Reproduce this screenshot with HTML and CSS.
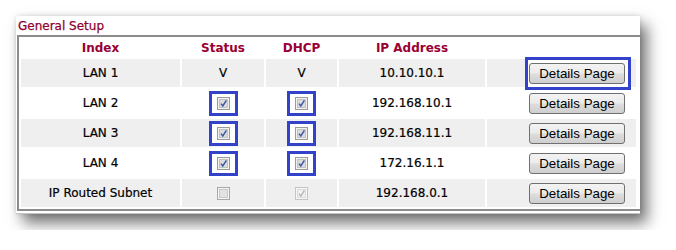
FILE: index.html
```html
<!DOCTYPE html>
<html lang="en">
<head>
  <meta charset="UTF-8">
  <title>General Setup</title>
  <link rel="stylesheet" href="styles.css">
</head>
<body>

  <div class="panel">
    <div class="panel-title">General Setup</div>
    <div class="frame">
      <table class="lan-table">
        <thead>
          <tr>
            <th class="c-index">Index</th>
            <th class="c-status">Status</th>
            <th class="c-dhcp">DHCP</th>
            <th class="c-ip">IP Address</th>
            <th class="c-btn"></th>
          </tr>
        </thead>
        <tbody>
          <tr class="odd">
            <td>LAN 1</td>
            <td>V</td>
            <td>V</td>
            <td>10.10.10.1</td>
            <td class="btn-cell"><span class="hl hl-btn"><button class="details">Details Page</button></span></td>
          </tr>
          <tr>
            <td>LAN 2</td>
            <td><span class="hl hl-cb"><svg class="cb" viewBox="0 0 13 13"><rect x=".5" y=".5" width="12" height="12" fill="#f2f2f2" stroke="#9a9a9a"/><rect x="2.5" y="2.5" width="8" height="8" fill="#dcdcdc" stroke="#c2c2c2"/><path d="M4 6.6l1.8 2.4 3.6-5.6" fill="none" stroke="#3d58a8" stroke-width="1.5"/></svg></span></td>
            <td><span class="hl hl-cb"><svg class="cb" viewBox="0 0 13 13"><rect x=".5" y=".5" width="12" height="12" fill="#f2f2f2" stroke="#9a9a9a"/><rect x="2.5" y="2.5" width="8" height="8" fill="#dcdcdc" stroke="#c2c2c2"/><path d="M4 6.6l1.8 2.4 3.6-5.6" fill="none" stroke="#3d58a8" stroke-width="1.5"/></svg></span></td>
            <td>192.168.10.1</td>
            <td class="btn-cell"><button class="details">Details Page</button></td>
          </tr>
          <tr class="odd">
            <td>LAN 3</td>
            <td><span class="hl hl-cb"><svg class="cb" viewBox="0 0 13 13"><rect x=".5" y=".5" width="12" height="12" fill="#f2f2f2" stroke="#9a9a9a"/><rect x="2.5" y="2.5" width="8" height="8" fill="#dcdcdc" stroke="#c2c2c2"/><path d="M4 6.6l1.8 2.4 3.6-5.6" fill="none" stroke="#3d58a8" stroke-width="1.5"/></svg></span></td>
            <td><span class="hl hl-cb"><svg class="cb" viewBox="0 0 13 13"><rect x=".5" y=".5" width="12" height="12" fill="#f2f2f2" stroke="#9a9a9a"/><rect x="2.5" y="2.5" width="8" height="8" fill="#dcdcdc" stroke="#c2c2c2"/><path d="M4 6.6l1.8 2.4 3.6-5.6" fill="none" stroke="#3d58a8" stroke-width="1.5"/></svg></span></td>
            <td>192.168.11.1</td>
            <td class="btn-cell"><button class="details">Details Page</button></td>
          </tr>
          <tr>
            <td>LAN 4</td>
            <td><span class="hl hl-cb"><svg class="cb" viewBox="0 0 13 13"><rect x=".5" y=".5" width="12" height="12" fill="#f2f2f2" stroke="#9a9a9a"/><rect x="2.5" y="2.5" width="8" height="8" fill="#dcdcdc" stroke="#c2c2c2"/><path d="M4 6.6l1.8 2.4 3.6-5.6" fill="none" stroke="#3d58a8" stroke-width="1.5"/></svg></span></td>
            <td><span class="hl hl-cb"><svg class="cb" viewBox="0 0 13 13"><rect x=".5" y=".5" width="12" height="12" fill="#f2f2f2" stroke="#9a9a9a"/><rect x="2.5" y="2.5" width="8" height="8" fill="#dcdcdc" stroke="#c2c2c2"/><path d="M4 6.6l1.8 2.4 3.6-5.6" fill="none" stroke="#3d58a8" stroke-width="1.5"/></svg></span></td>
            <td>172.16.1.1</td>
            <td class="btn-cell"><button class="details">Details Page</button></td>
          </tr>
          <tr class="odd">
            <td>IP Routed Subnet</td>
            <td><svg class="cb" viewBox="0 0 13 13"><rect x=".5" y=".5" width="12" height="12" fill="#f4f4f4" stroke="#a8a8a8"/><rect x="2.5" y="2.5" width="8" height="8" fill="#e2e2e2" stroke="#c8c8c8"/></svg></td>
            <td><svg class="cb" viewBox="0 0 13 13"><rect x=".5" y=".5" width="12" height="12" fill="#f7f7f7" stroke="#c4c4c4"/><rect x="2.5" y="2.5" width="8" height="8" fill="#f0f0f0" stroke="#dcdcdc"/><path d="M4 6.6l1.8 2.4 3.6-5.6" fill="none" stroke="#b4b4b4" stroke-width="1.3"/></svg></td>
            <td>192.168.0.1</td>
            <td class="btn-cell"><button class="details">Details Page</button></td>
          </tr>
        </tbody>
      </table>
    </div>
  </div>

</body>
</html>
```

FILE: styles.css
```css
* {
  box-sizing: border-box;
}

body {
  margin: 0;
  padding: 16px;
  background-color: #ffffff;
  font-family: "DejaVu Sans", Verdana, sans-serif;
  font-size: 12px;
  color: #000000;
}

.panel {
  width: 624px;
  padding: 3px 0 2px 1px;
  background-color: #ffffff;
  border-bottom: 1px solid #c4c4c4;
  box-shadow: 7px 9px 14px rgba(0, 0, 0, 0.55), 0 0 5px rgba(0, 0, 0, 0.15);
}

.panel-title {
  height: 14px;
  line-height: 14px;
  margin-bottom: 2px;
  padding-left: 1px;
  color: #8f0030;
  -webkit-text-stroke: 0.25px #8f0030;
}

.frame {
  border-top: 2px solid #8c8c8c;
  border-left: 2px solid #8c8c8c;
  border-bottom: 2px solid #8c8c8c;
}

.lan-table {
  width: 619px;
  table-layout: fixed;
  border-collapse: separate;
  border-spacing: 2px;
}

.lan-table th,
.lan-table td {
  padding: 0;
  text-align: center;
  vertical-align: middle;
}

.lan-table th {
  height: 18px;
  color: #990033;
  font-weight: bold;
}

.lan-table td {
  height: 28px;
  -webkit-text-stroke: 0.2px #000000;
}

.c-index { width: 159px; }
.c-status { width: 82px; }
.c-dhcp { width: 71px; }
.c-ip { width: 146px; }
.c-btn { width: 149px; }

.odd td {
  background-color: #efefef;
}

.cb {
  display: inline-block;
  width: 13px;
  height: 13px;
  vertical-align: middle;
}

.hl {
  display: inline-block;
  vertical-align: middle;
  border: 3px solid #3343c9;
  background-color: #ffffff;
}

.hl-cb {
  padding: 3px 5px;
}

.hl-cb .cb {
  display: block;
}

.hl-btn {
  margin: -3px -6px -3px 0;
  padding: 3px 3px 3px 1px;
}

.hl .details {
  display: block;
}

.btn-cell {
  text-align: right !important;
  padding-right: 11px !important;
}

.details {
  width: 96px;
  height: 21px;
  padding: 0;
  vertical-align: middle;
  font-family: "Liberation Sans", Arial, sans-serif;
  font-size: 13.33px;
  color: #000000;
  -webkit-text-stroke: 0;
  border: 1px solid #707070;
  border-radius: 3px;
  background: linear-gradient(#f3f3f3 0%, #ebebeb 48%, #dddddd 52%, #cfcfcf 100%);
}
```
